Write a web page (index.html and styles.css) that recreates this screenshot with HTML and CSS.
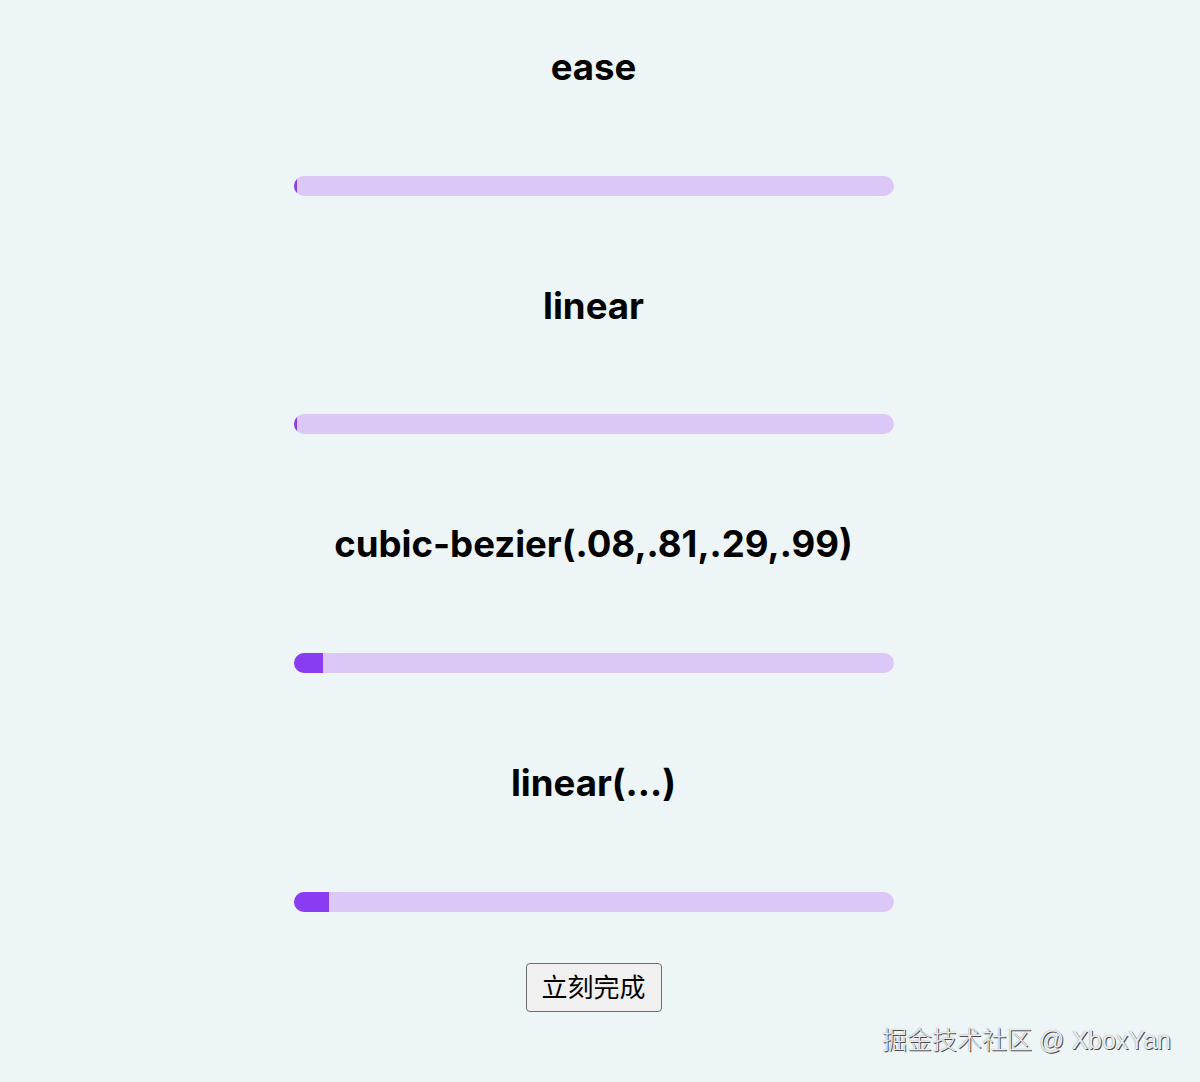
FILE: index.html
```html
<!DOCTYPE html>
<html lang="zh">
<head>
<meta charset="utf-8">
<link rel="stylesheet" href="styles.css">
</head>
<body>
<main class="page">
  <section class="demo">
    <h2 class="title">ease</h2>
    <div class="track"><div class="fill" style="width:3px"></div></div>
  </section>
  <section class="demo">
    <h2 class="title">linear</h2>
    <div class="track"><div class="fill" style="width:3px"></div></div>
  </section>
  <section class="demo">
    <h2 class="title">cubic-bezier(.08,.81,.29,.99)</h2>
    <div class="track"><div class="fill" style="width:29px"></div></div>
  </section>
  <section class="demo">
    <h2 class="title">linear(...)</h2>
    <div class="track"><div class="fill" style="width:35px"></div></div>
  </section>
  <button class="done" type="button">立刻完成</button>
</main>
<div class="mark">掘金技术社区 @ XboxYan</div>
</body>
</html>
```

FILE: styles.css
```css
html, body {
  margin: 0;
  padding: 0;
  background: #eef5f7;
}
body {
  font-family: Inter, "Noto Sans CJK SC", sans-serif;
  color: #000;
  position: relative;
  min-height: 1082px;
}
.page {
  width: 1187px;
  display: flex;
  flex-direction: column;
  align-items: center;
  padding-top: 45px;
}
.demo {
  display: flex;
  flex-direction: column;
  align-items: center;
  margin-bottom: 88px;
}
.demo:last-of-type {
  margin-bottom: 51px;
}
.title {
  margin: 0 0 86.67px;
  font-size: 36.6px;
  line-height: 44px;
  font-weight: 700;
}
.track {
  width: 600px;
  height: 20px;
  border-radius: 10px;
  background: #dcc8f6;
  overflow: hidden;
  display: flex;
}
.fill {
  height: 100%;
  background: #8a3cf2;
}
.done {
  width: 136px;
  height: 49px;
  font-family: "Noto Sans CJK SC", sans-serif;
  font-size: 26px;
  line-height: 1;
  color: #000;
  background: #f0f0f0;
  border: 1px solid #6e6e6e;
  border-radius: 4px;
  padding: 0 0 2px;
}
.mark {
  position: absolute;
  right: 29px;
  top: 1020px;
  font-family: "Liberation Sans", "Noto Sans CJK SC", sans-serif;
  font-size: 25px;
  font-weight: 300;
  color: #ececec;
  text-shadow: 1px 1px 0 #4a4a4a, 0 0 1px #888;
}
```
